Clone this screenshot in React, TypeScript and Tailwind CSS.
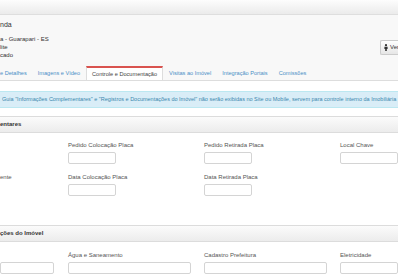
import React from "react";

const tabs = [
  { label: "e Detalhes", active: false },
  { label: "Imagens e Vídeo", active: false },
  { label: "Controle e Documentação", active: true },
  { label: "Visitas ao Imóvel", active: false },
  { label: "Integração Portais", active: false },
  { label: "Comissões", active: false },
];

const Field = ({ label, width }: { label: string; width: string }) => (
  <div className="flex flex-col">
    <label className="text-[6px] leading-[8px] text-[#555] whitespace-nowrap">{label}</label>
    <input
      className={`${width} h-[12px] mt-[3px] bg-white border border-[#d4d4d4] rounded-[2px]`}
    />
  </div>
);

const SectionBar = ({ title }: { title: string }) => (
  <div className="h-[17px] flex items-center bg-gradient-to-b from-[#fbfbfb] to-[#ececec] border-y border-[#dcdcdc] text-[6px] font-bold text-[#333]">
    {title}
  </div>
);

export default function App() {
  return (
    <div
      className="w-[398px] h-[280px] overflow-hidden bg-white"
      style={{ fontFamily: '"Liberation Sans", Arial, sans-serif' }}
    >
      {/* top bar */}
      <div className="h-[15px] bg-gradient-to-b from-[#fdfdfd] to-[#ebebeb] border-b border-[#dedede]" />

      {/* header */}
      <div className="w-[398px] bg-[#f8f8f8] flex">
        <div className="w-[380px] pt-[6px] text-[#333]">
          <div className="text-[7px] leading-[8px]">nda</div>
          <div className="mt-[6px] text-[6px] leading-[8px]">a - Guarapari - ES</div>
          <div className="text-[6px] leading-[8px]">lite</div>
          <div className="text-[6px] leading-[8px]">cado</div>
        </div>
        <button className="mt-[25px] h-[15px] w-[18px] shrink-0 pl-[3px] flex items-center gap-[2px] overflow-hidden bg-gradient-to-b from-white to-[#e6e6e6] border border-r-0 border-[#ccc] rounded-l-[2px] text-[6px] text-[#333] whitespace-nowrap">
          <svg width="4" height="7" viewBox="0 0 4 7" className="shrink-0">
            <circle cx="2" cy="1.2" r="1.1" fill="#333" />
            <path d="M0.4 2.8 H3.6 V5 H2.8 V7 H1.2 V5 H0.4 Z" fill="#333" />
          </svg>
          Ver
        </button>
      </div>

      {/* tabs */}
      <div className="bg-[#f8f8f8] pt-[7px] border-b border-[#ddd] flex -ml-[5px] w-[403px] overflow-hidden">
        {tabs.map((t) => (
          <div
            key={t.label}
            className={
              t.active
                ? "h-[15px] -mb-px px-[5px] mr-px flex items-center bg-white border-t-2 border-t-[#d9534f] border-x border-x-[#ddd] text-[5.6px] text-[#444] whitespace-nowrap"
                : "h-[14px] px-[5px] mr-px flex items-center text-[5.6px] text-[#4a8fc6] whitespace-nowrap"
            }
          >
            {t.label}
          </div>
        ))}
      </div>

      {/* tab content */}
      <div className="pt-[10px]">
        <div className="h-[17px] w-[398px] flex items-center pl-[2px] bg-[#d9edf7] border-y border-[#bce8f1] text-[5.5px] text-[#3a87ad] whitespace-nowrap overflow-hidden">
          Guia "Informações Complementares" e "Registros e Documentações do Imóvel" não serão exibidas no Site ou Mobile, servem para controle interno da Imobiliária
        </div>

        <div className="mt-[8px]">
          <SectionBar title="entares" />
        </div>

        <div className="grid grid-cols-[68px_136px_136px_58px] w-[398px] pt-[8px] gap-y-[9px] overflow-hidden">
          <div />
          <Field label="Pedido Colocação Placa" width="w-[48px]" />
          <Field label="Pedido Retirada Placa" width="w-[48px]" />
          <Field label="Local Chave" width="w-[58px]" />
          <div className="text-[6px] leading-[8px] text-[#555]">ente</div>
          <Field label="Data Colocação Placa" width="w-[48px]" />
          <Field label="Data Retirada Placa" width="w-[48px]" />
          <div />
        </div>

        <div className="mt-[29px]">
          <SectionBar title="ções do Imóvel" />
        </div>

        <div className="grid grid-cols-[68px_136px_136px_58px] w-[398px] pt-[9px]">
          <div className="flex flex-col">
            <div className="h-[8px]" />
            <input className="w-[54px] h-[12px] mt-[3px] bg-white border border-[#d4d4d4] rounded-[2px]" />
          </div>
          <Field label="Água e Saneamento" width="w-[123px]" />
          <Field label="Cadastro Prefeitura" width="w-[123px]" />
          <Field label="Eletricidade" width="w-[58px]" />
        </div>
      </div>
    </div>
  );
}
